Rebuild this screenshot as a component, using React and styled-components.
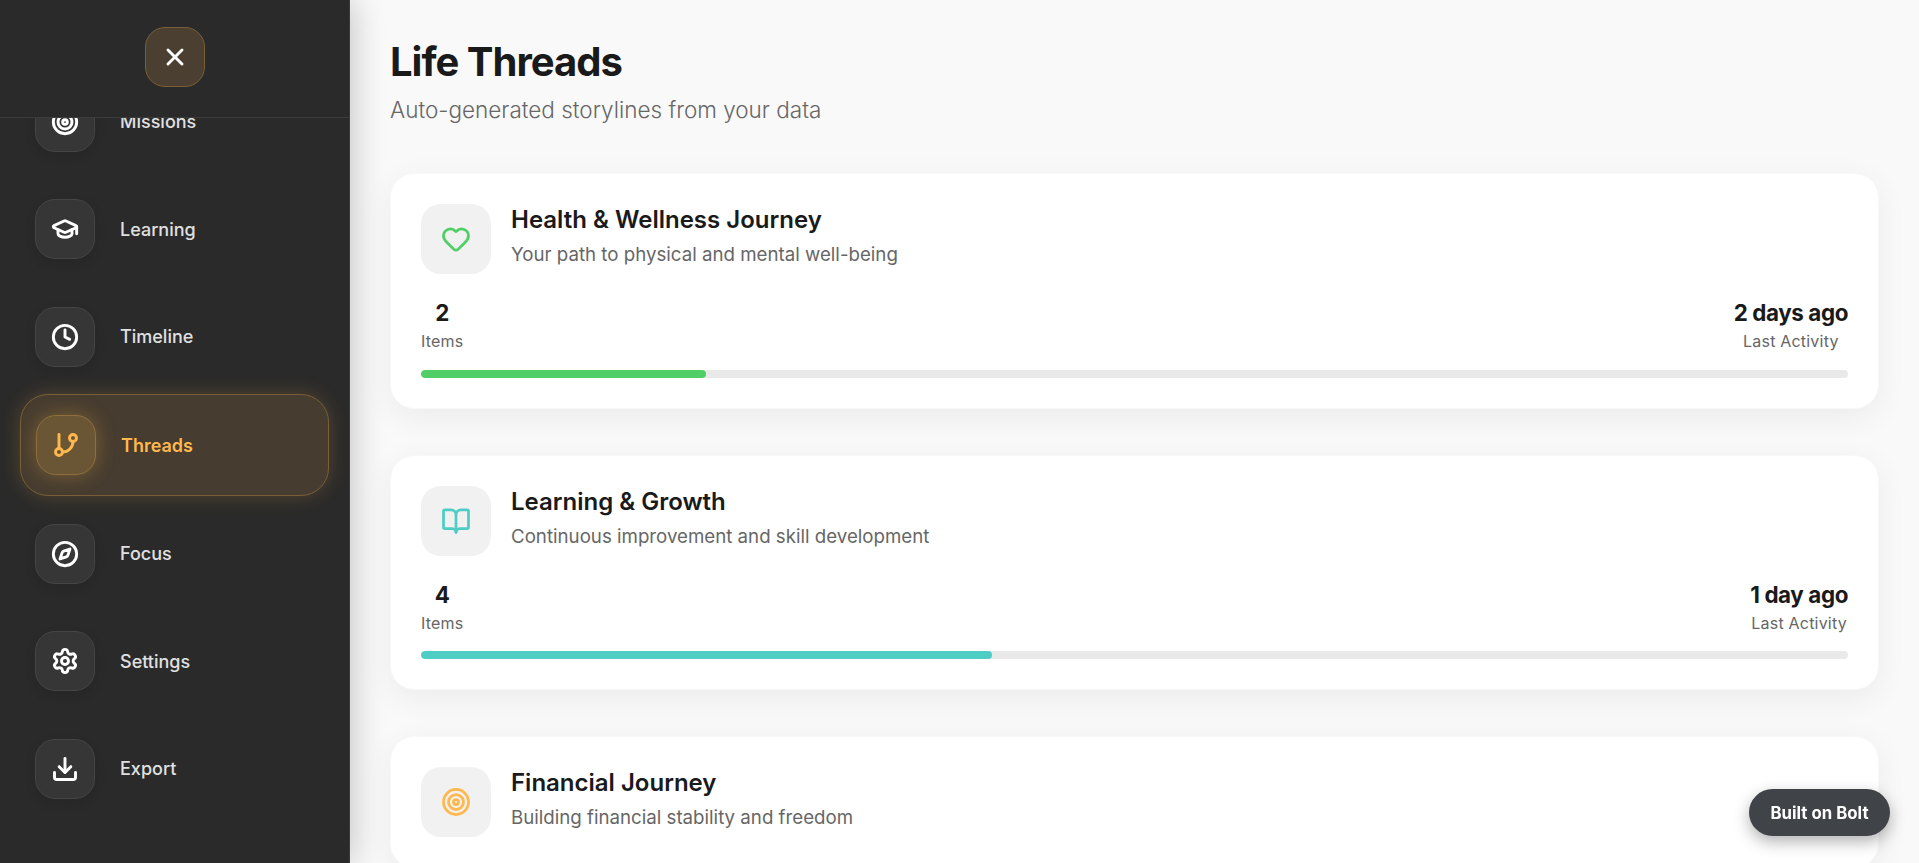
import React from 'react'
import styled, { createGlobalStyle } from 'styled-components'
import {
  X, Target, GraduationCap, Clock, GitBranch, Compass, Settings, Download, Heart, BookOpen,
} from 'lucide-react'

const navItems = [
  { label: 'Missions', icon: Target },
  { label: 'Learning', icon: GraduationCap },
  { label: 'Timeline', icon: Clock },
  { label: 'Threads', icon: GitBranch, active: true },
  { label: 'Focus', icon: Compass },
  { label: 'Settings', icon: Settings },
  { label: 'Export', icon: Download },
]

const threads = [
  {
    title: 'Health & Wellness Journey',
    sub: 'Your path to physical and mental well-being',
    icon: Heart,
    color: '#51cf66',
    items: 2,
    last: '2 days ago',
    progress: 20,
  },
  {
    title: 'Learning & Growth',
    sub: 'Continuous improvement and skill development',
    icon: BookOpen,
    color: '#4ecdc4',
    items: 4,
    last: '1 day ago',
    progress: 40,
  },
  {
    title: 'Financial Journey',
    sub: 'Building financial stability and freedom',
    icon: Target,
    color: '#ffb84d',
  },
]

export default function App() {
  return (
    <>
      <GlobalStyle />
      <Page>
        <Sidebar>
          <SidebarHeader>
            <CloseButton>
              <X size={28} strokeWidth={2.5} />
            </CloseButton>
          </SidebarHeader>
          <Nav>
            {navItems.map((item) => (
              <NavItem key={item.label} $active={item.active}>
                <NavIcon $active={item.active}>
                  <item.icon size={28} strokeWidth={2.5} />
                </NavIcon>
                <NavLabel $active={item.active}>{item.label}</NavLabel>
              </NavItem>
            ))}
          </Nav>
        </Sidebar>
        <Main>
          <Title>Life Threads</Title>
          <Subtitle>Auto-generated storylines from your data</Subtitle>
          <CardList>
            {threads.map((t) => (
              <Card key={t.title}>
                <CardHead>
                  <CardIcon $color={t.color}>
                    <t.icon size={30} strokeWidth={2.2} />
                  </CardIcon>
                  <div>
                    <CardTitle>{t.title}</CardTitle>
                    <CardSub>{t.sub}</CardSub>
                  </div>
                </CardHead>
                {t.items && (
                  <>
                    <Stats>
                      <Stat>
                        <StatValue>{t.items}</StatValue>
                        <StatLabel>Items</StatLabel>
                      </Stat>
                      <Stat>
                        <StatValue>{t.last}</StatValue>
                        <StatLabel>Last Activity</StatLabel>
                      </Stat>
                    </Stats>
                    <Track>
                      <Fill $color={t.color} style={{ width: t.progress + '%' }} />
                    </Track>
                  </>
                )}
              </Card>
            ))}
          </CardList>
        </Main>
        <BoltBadge>Built on Bolt</BoltBadge>
      </Page>
    </>
  )
}

const GlobalStyle = createGlobalStyle`
  * { box-sizing: border-box; }
  html, body { margin: 0; padding: 0; height: 100%; overflow: hidden; }
  body { font-family: Inter, "Liberation Sans", sans-serif; background: #f9f9f9; }
`

const Page = styled.div`
  display: flex;
  height: 100vh;
  overflow: hidden;
`

const Sidebar = styled.aside`
  width: 350px;
  flex-shrink: 0;
  height: 100%;
  display: flex;
  flex-direction: column;
  background: #2a2a2a;
  border-right: 1px solid #3a3a3a;
  box-shadow: 4px 0 30px rgba(0, 0, 0, 0.2);
  position: relative;
  z-index: 2;
`

const SidebarHeader = styled.div`
  height: 118px;
  flex-shrink: 0;
  padding-top: 27px;
  display: flex;
  justify-content: center;
  align-items: flex-start;
  border-bottom: 1px solid #3c3c3c;
  background: #2a2a2a;
  position: relative;
  z-index: 1;
`

const CloseButton = styled.div`
  width: 60px;
  height: 60px;
  border-radius: 20px;
  display: flex;
  align-items: center;
  justify-content: center;
  color: #fff;
  background: #4a3f30;
  border: 1px solid #7a5f36;
`

const Nav = styled.nav`
  flex: 1;
  overflow: hidden;
  padding: 0 20px;
  display: flex;
  flex-direction: column;
  gap: 7.5px;
  & > :first-child {
    margin-top: -46.5px;
  }
`

const NavItem = styled.div`
  flex-shrink: 0;
  display: flex;
  align-items: center;
  gap: 25px;
  padding: 20px 15px;
  border-radius: 28px;
  border: ${(p) => (p.$active ? '1px solid #7a5f36' : 'none')};
  background: ${(p) => (p.$active ? '#463c2f' : 'transparent')};
  box-shadow: ${(p) => (p.$active ? '0 0 20px rgba(255, 184, 77, 0.2)' : 'none')};
`

const NavIcon = styled.div`
  width: 60px;
  height: 60px;
  flex-shrink: 0;
  border-radius: 20px;
  display: flex;
  align-items: center;
  justify-content: center;
  color: ${(p) => (p.$active ? '#ffb84d' : '#fff')};
  background: ${(p) => (p.$active ? '#6a5534' : '#363636')};
  border: 1px solid ${(p) => (p.$active ? '#8f6f3c' : '#454545')};
  box-shadow: ${(p) => (p.$active ? '0 0 20px rgba(255, 184, 77, 0.3)' : '0 4px 12px rgba(0, 0, 0, 0.1)')};
`

const NavLabel = styled.span`
  font-size: 18px;
  font-weight: ${(p) => (p.$active ? 600 : 500)};
  color: ${(p) => (p.$active ? '#ffb84d' : '#e0e0e0')};
`

const Main = styled.main`
  flex: 1;
  min-width: 0;
  height: 100%;
  overflow: hidden;
  padding: 40px 40px 0;
`

const Title = styled.h1`
  margin: 0;
  font-size: 40px;
  line-height: 44px;
  font-weight: 700;
  color: #1a1a1a;
  letter-spacing: -1px;
`

const Subtitle = styled.p`
  margin: 12px 0 0;
  font-size: 22.5px;
  line-height: 28px;
  font-weight: 300;
  color: #666;
`

const CardList = styled.div`
  margin-top: 49px;
  display: flex;
  flex-direction: column;
  gap: 46px;
`

const Card = styled.section`
  background: #fff;
  border: 1px solid #f8f8f8;
  border-radius: 24px;
  padding: 30px;
  box-shadow: 0 8px 32px rgba(0, 0, 0, 0.06);
`

const CardHead = styled.div`
  display: flex;
  gap: 20px;
`

const CardIcon = styled.div`
  width: 70px;
  height: 70px;
  flex-shrink: 0;
  border-radius: 20px;
  display: flex;
  align-items: center;
  justify-content: center;
  background: #f1f1f1;
  color: ${(p) => p.$color};
`

const CardTitle = styled.h3`
  margin: 1px 0 0;
  font-size: 24px;
  line-height: 30px;
  font-weight: 600;
  color: #1a1a1a;
`

const CardSub = styled.p`
  margin: 7px 0 0;
  font-size: 18.7px;
  line-height: 26px;
  font-weight: 400;
  color: #666;
`

const Stats = styled.div`
  margin-top: 24px;
  display: flex;
  justify-content: space-between;
`

const Stat = styled.div`
  text-align: center;
`

const StatValue = styled.div`
  font-size: 22.4px;
  line-height: 30px;
  font-weight: 700;
  letter-spacing: -0.4px;
  color: #1a1a1a;
`

const StatLabel = styled.div`
  margin-top: 1px;
  font-size: 16px;
  line-height: 24px;
  letter-spacing: 0.2px;
  color: #666;
`

const Track = styled.div`
  margin-top: 16.5px;
  height: 8px;
  border-radius: 4px;
  background: #e9e9e9;
  overflow: hidden;
`

const Fill = styled.div`
  height: 100%;
  border-radius: 4px;
  background: ${(p) => p.$color};
`

const BoltBadge = styled.div`
  position: fixed;
  right: 29px;
  bottom: 27px;
  z-index: 5;
  width: 141px;
  height: 47px;
  border-radius: 24px;
  display: flex;
  align-items: center;
  justify-content: center;
  font-size: 16.8px;
  font-weight: 700;
  color: #fff;
  background: #404347;
  box-shadow: 0 6px 16px rgba(0, 0, 0, 0.3);
`
